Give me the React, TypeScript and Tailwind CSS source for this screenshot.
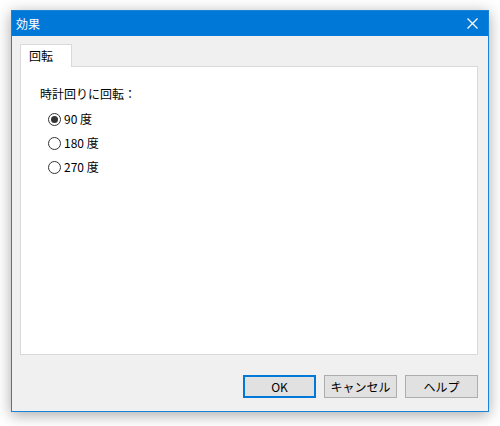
import React, { useState } from 'react';

const font = { fontFamily: '"Noto Sans CJK JP", "Noto Sans", sans-serif' };

function Radio({ checked, label, onClick }: { checked: boolean; label: string; onClick: () => void }) {
    return (
        <div className="flex items-center h-[24px] cursor-default" onClick={onClick}>
            <div className="w-[13px] h-[13px] rounded-full border border-[#333333] bg-white flex items-center justify-center">
                {checked && <div className="w-[7px] h-[7px] rounded-full bg-[#333333]" />}
            </div>
            <span className="ml-[3px] text-[12px] leading-[16px] text-black">{label}</span>
        </div>
    );
}

export default function App() {
    const [angle, setAngle] = useState('90');
    const options = ['90', '180', '270'];

    return (
        <div className="w-[500px] h-[426px] bg-white pt-[10px] pl-[11px]" style={font}>
            {/* Dialog window */}
            <div className="w-[478px] h-[402px] border border-[#1883d7] bg-[#f0f0f0] flex flex-col shadow-[0_3px_14px_rgba(0,0,0,0.35)]">
                {/* Title bar */}
                <div className="h-[25px] bg-[#0078d7] flex items-center justify-between pl-[4px] pr-[10px]">
                    <span className="text-white text-[12px] leading-[16px]">効果</span>
                    <svg width="11" height="11" viewBox="0 0 11 11">
                        <path d="M0.5 0.5 L10.5 10.5 M10.5 0.5 L0.5 10.5" stroke="white" strokeWidth="1.3" />
                    </svg>
                </div>

                {/* Body */}
                <div className="flex-1 flex flex-col pt-[8px] pl-[8px] pr-[10px]">
                    {/* Tab header */}
                    <div className="flex h-[22px]">
                        <div className="w-[52px] h-[23px] bg-white border border-b-0 border-[#d9d9d9] pl-[8px] pt-[3px] text-[12px] leading-[16px] text-black relative z-10">
                            回転
                        </div>
                    </div>

                    {/* Tab panel */}
                    <div className="h-[289px] bg-white border border-[#d9d9d9] pl-[19px] pt-[19px]">
                        <div className="text-[12px] leading-[16px] text-black mb-[5px]">時計回りに回転：</div>
                        <div className="pl-[8px]">
                            {options.map((o) => (
                                <Radio key={o} checked={angle === o} label={`${o} 度`} onClick={() => setAngle(o)} />
                            ))}
                        </div>
                    </div>

                    {/* Buttons */}
                    <div className="flex justify-end gap-[8px] mt-[20px]">
                        <button className="w-[73px] h-[23px] bg-[#e1e1e1] border-2 border-[#0078d7] text-[12px] text-black">
                            OK
                        </button>
                        <button className="w-[73px] h-[23px] bg-[#e1e1e1] border border-[#adadad] text-[12px] text-black">
                            キャンセル
                        </button>
                        <button className="w-[73px] h-[23px] bg-[#e1e1e1] border border-[#adadad] text-[12px] text-black">
                            ヘルプ
                        </button>
                    </div>
                </div>
            </div>
        </div>
    );
}
